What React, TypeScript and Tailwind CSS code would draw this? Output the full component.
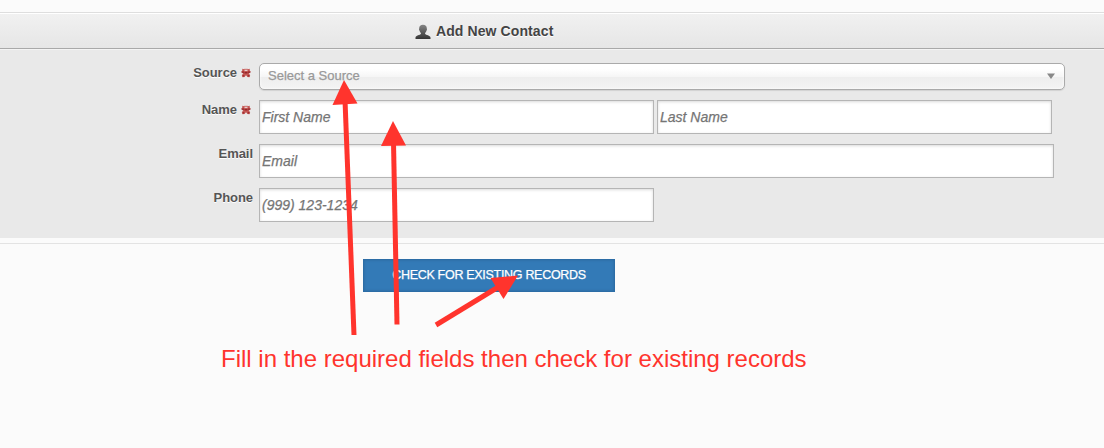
import type { ReactNode } from 'react'

interface FieldRowProps {
  label: string
  required?: boolean
  className: string
  labelClass: string
  children: ReactNode
}

const inputClass =
  'block h-[34px] rounded-none border border-[#b5b5b5] bg-white px-[2px] text-[14px] italic text-[#555] outline-none placeholder:text-[#757575] placeholder:opacity-100 shadow-[inset_0_1px_3px_rgba(0,0,0,0.15)] [-webkit-text-stroke:0.25px]'

function RequiredMark() {
  return (
    <svg width="10" height="10" viewBox="0 0 10 10" className="-mt-px ml-1 shrink-0">
      <path d="M1.3 0.7 3.2 1.3 4 .4 5 1.2 6 .4 6.8 1.3 8.7.7 8.8 2.8 9.9 4 8 5.3 9.2 7.8 8.4 9.3 6.5 9 5 7.300 3.500 9 1.600 9.300.8 7.800 2 5.300.1 4 1.200 2.800z" fill="#c45653" />
      <path d="M3.500 1.700h3v1.200h-3z" fill="#eadcdc" />
      <path d="M.7 3.500h2.300v1.200H.7zM7 3.500h2.300v1.200H7zM1.700 7.200h1.600v1.400H1.700zM6.700 7.200h1.600v1.400H6.700zM3.500 4h3v1.500h-3z" fill="#93262a" />
    </svg>
  )
}

function PersonIcon() {
  return (
    <svg width="16" height="16" viewBox="0 0 16 16" className="shrink-0">
      <defs>
        <linearGradient id="person" x1="0" y1="0" x2="0" y2="1">
          <stop offset="0" stopColor="#858585" />
          <stop offset="1" stopColor="#353535" />
        </linearGradient>
      </defs>
      <path
        d="M8 0.8c2.4 0 3.8 1.4 3.8 3.5 0 .6.3.8.1 1.6-.1.5-.5.6-.6 1-.2 1-.7 1.5-1.2 2v1.2c.8 1 5.1 1.3 5.4 3.5V15H.5v-1.4c.3-2.2 4.6-2.5 5.4-3.5V8.9c-.5-.5-1-1-1.2-2-.1-.4-.5-.5-.6-1-.2-.8.1-1 .1-1.6C4.2 2.2 5.6.8 8 .8z"
        fill="url(#person)"
      />
    </svg>
  )
}

function FieldRow({ label, required, className, labelClass, children }: FieldRowProps) {
  return (
    <div className={`flex items-start ${className}`}>
      <label
        className={`flex h-4 w-[259px] shrink-0 items-center justify-end text-[13px] font-bold leading-4 tracking-[-0.05px] text-[#555] [text-shadow:0_1px_0_#fff] ${labelClass}`}
      >
        {label}
        {required && <RequiredMark />}
      </label>
      {children}
    </div>
  )
}

function Annotations() {
  return (
    <svg width="1104" height="448" viewBox="0 0 1104 448" className="pointer-events-none absolute left-0 top-0">
      <g stroke="#ff342d" strokeWidth="5">
        <path d="M345 100 354 335" />
        <path d="M393.5 142 397 324.5" />
        <path d="M436 325 500 286" />
      </g>
      <g fill="#ff342d">
        <path d="M344 80 357.5 103.5 332.5 105z" />
        <path d="M393 121 406 145.5 381 146z" />
        <path d="M518 275.5 490.5 278 503.5 299z" />
      </g>
    </svg>
  )
}

export default function App() {
  return (
    <div className="relative h-[448px] w-[1104px] overflow-hidden bg-[#fbfbfb] font-['Liberation_Sans',Arial,sans-serif]">
      <header className="mt-3 flex h-[37px] items-center border-b border-t border-b-[#a9a9a9] border-t-[#dedede] bg-linear-to-b from-[#f1f1f1] to-[#e6e6e6] pl-[415px] pt-[2px] shadow-[inset_0_1px_0_#fff]">
        <PersonIcon />
        <h1 className="ml-[5px] whitespace-nowrap text-[14px] font-bold tracking-[0.1px] text-[#444] [text-shadow:0_1px_0_#fff]">Add New Contact</h1>
      </header>

      <form className="h-[189px] border-t border-[#f4f4f4] bg-[#e9e9e9] pt-[13px]">
        <FieldRow label="Source" required className="h-[27px]" labelClass="mt-[2px] pr-2">
          <button
            type="button"
            className="flex h-[27px] w-[806px] items-center justify-between rounded-[5px] border border-[#aaa] bg-[linear-gradient(#fff_20%,#f6f6f6_50%,#eee_52%,#f4f4f4_100%)] pb-[2px] pl-2 pr-[9px] text-[13px] text-[#999] shadow-[inset_0_0_3px_#fff,0_1px_1px_rgba(0,0,0,0.1)] [-webkit-text-stroke:0.25px]"
          >
            <span>Select a Source</span>
            <svg width="8" height="6" viewBox="0 0 8 6">
              <path d="M0 .5h8L4 6z" fill="#888" />
            </svg>
          </button>
        </FieldRow>

        <FieldRow label="Name" required className="mt-[10px]" labelClass="mt-[2px] pr-2">
          <input className={`${inputClass} w-[395px]`} placeholder="First Name" />
          <input className={`${inputClass} ml-[3px] w-[395px]`} placeholder="Last Name" />
        </FieldRow>

        <FieldRow label="Email" className="mt-[10px]" labelClass="mt-[2px] pr-[6px]">
          <input className={`${inputClass} w-[795px]`} placeholder="Email" />
        </FieldRow>

        <FieldRow label="Phone" className="mt-[10px]" labelClass="mt-[2px] pr-[6px]">
          <input className={`${inputClass} w-[395px]`} placeholder="(999) 123-1234" />
        </FieldRow>
      </form>

      <div className="mt-[5px] border-t border-[#e3e3e3] pt-[15px]">
        <button
          type="button"
          className="ml-[363px] flex h-[33px] w-[252px] items-center justify-center whitespace-nowrap border border-[#2c6da6] bg-[#337ab7] text-[12.5px] tracking-[-0.3px] text-white shadow-[inset_0_0_3px_rgba(0,0,0,0.15)] [-webkit-text-stroke:0.25px]"
        >
          CHECK FOR EXISTING RECORDS
        </button>
      </div>

      <p className="ml-[221px] mt-[52px] whitespace-nowrap text-[24px] leading-[30px] text-[#ff342d]">
        Fill in the required fields then check for existing records
      </p>

      <Annotations />
    </div>
  )
}
